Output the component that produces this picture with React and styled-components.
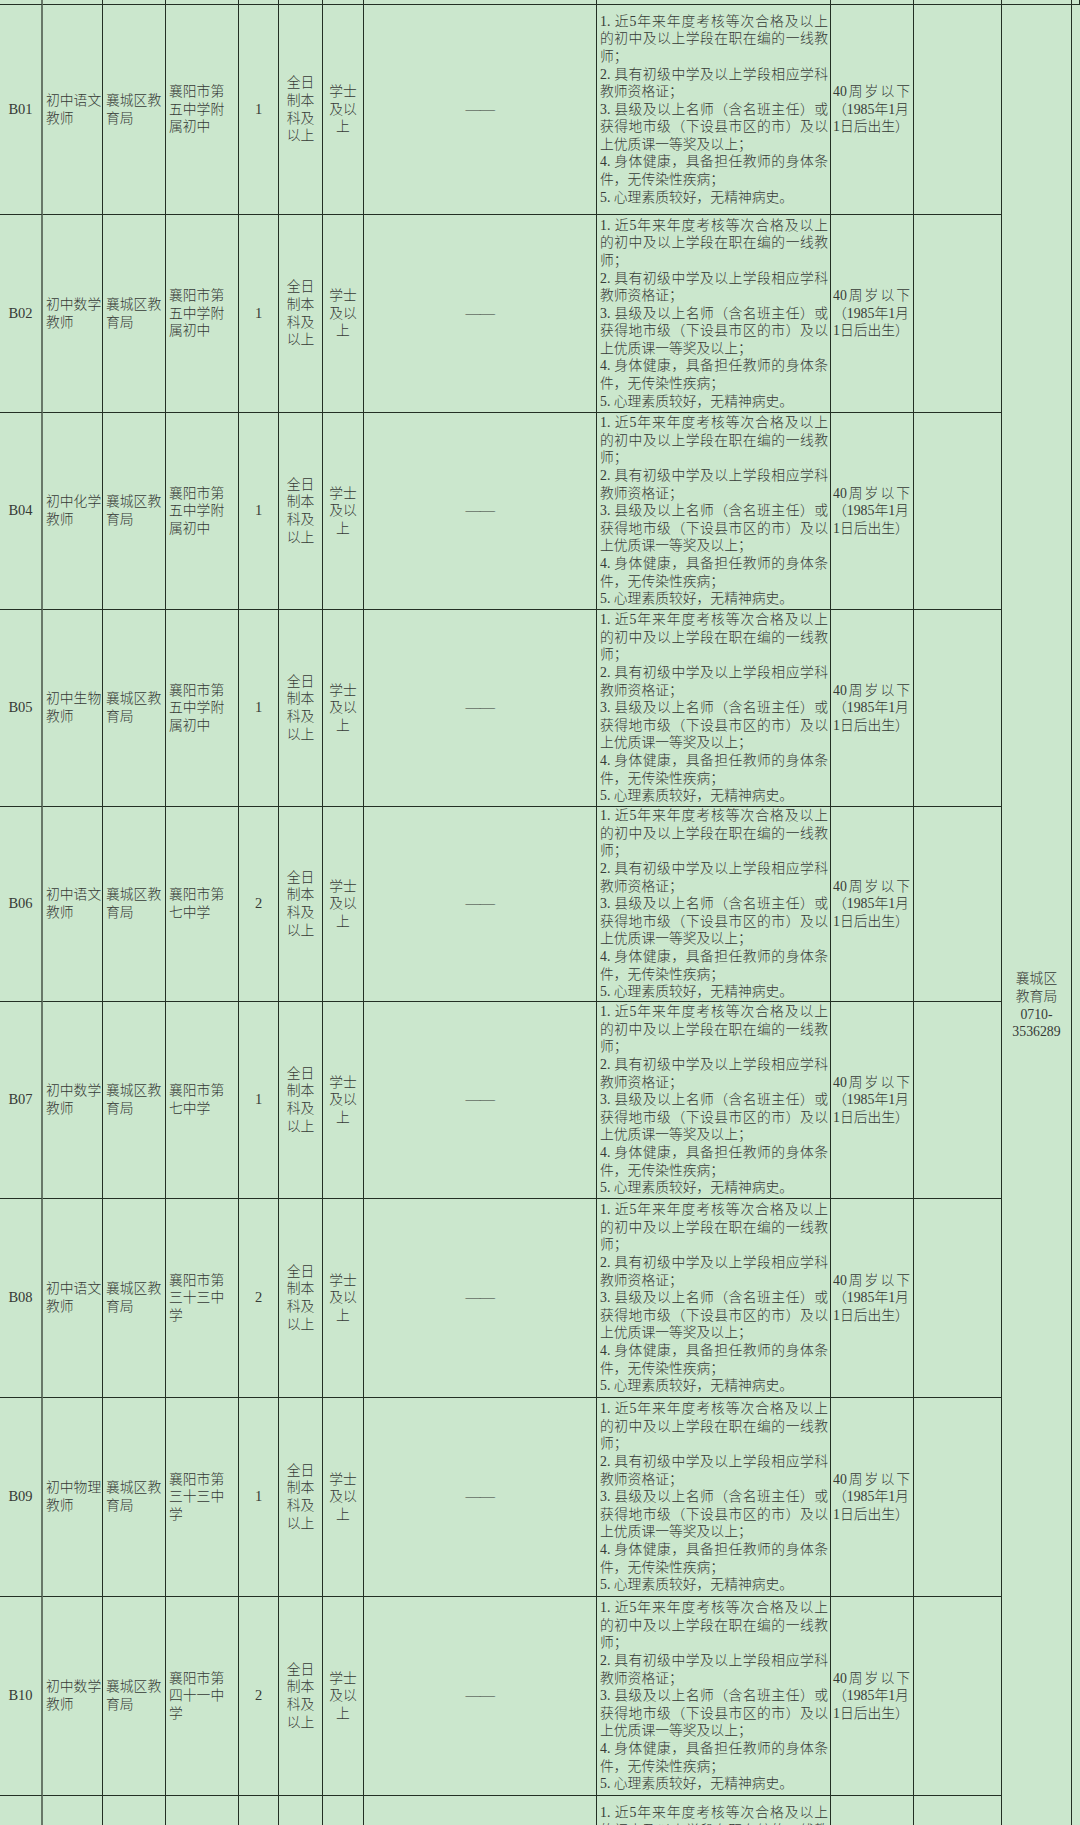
import React from 'react';
import styled, { createGlobalStyle } from 'styled-components';

const GlobalStyle = createGlobalStyle`
  html, body {
    margin: 0;
    padding: 0;
    background: #cbe7cd;
    overflow: hidden;
  }
  #root {
    width: 1080px;
    height: 1825px;
    overflow: hidden;
  }
`;

const LINE = '#243024';

const Sheet = styled.div`
  display: grid;
  grid-template-columns: 43px 60px 63px 73px 40px 44px 41px 233px 234px 83px 88px 70px 8px;
  grid-template-rows: 5px 210px 198px 197px 197px 195px 197px 199px 199px 199px 210px;
  width: 1080px;
  background: #cbe7cd;
  color: #363a36;
  font-family: "Liberation Serif", "Noto Sans CJK SC", serif;
  font-weight: 300;
  font-size: 13.8px;
  line-height: 17.6px;
`;

const Cell = styled.div`
  box-sizing: border-box;
  min-width: 0;
  overflow: hidden;
  display: flex;
  flex-direction: column;
  justify-content: center;
  align-items: ${(p) => (p.$center ? 'center' : 'stretch')};
  padding: 0 ${(p) => (p.$padR ?? 2)}px 0 ${(p) => (p.$padL ?? 3)}px;
  border-right: ${(p) => (p.$heavy ? '2px solid #687868' : `1px solid ${LINE}`)};
  border-bottom: ${(p) => (p.$open ? 'none' : `1px solid ${LINE}`)};
`;

const Code = styled.span`
  font-size: 14.5px;
  font-weight: 400;
`;

const Merged = styled(Cell)`
  grid-column: ${(p) => p.$col};
  grid-row: 2 / span 10;
  border-right: ${(p) => (p.$last ? 'none' : `1px solid ${LINE}`)};
`;

const Line = styled.div`
  white-space: nowrap;
  text-align: ${(p) => (p.$justify ? 'justify' : p.$mid ? 'center' : 'left')};
  text-align-last: ${(p) => (p.$justify ? 'justify' : p.$mid ? 'center' : 'left')};
`;

const Dash = styled.span`
  font-family: "Liberation Serif", serif;
  font-size: 15px;
  font-weight: 400;
  letter-spacing: -0.5px;
`;

const REQ = [
  ['1. 近5年来年度考核等次合格及以上', true],
  ['的初中及以上学段在职在编的一线教', true],
  ['师；', false],
  ['2. 具有初级中学及以上学段相应学科', true],
  ['教师资格证；', false],
  ['3. 县级及以上名师（含名班主任）或', true],
  ['获得地市级（下设县市区的市）及以', true],
  ['上优质课一等奖及以上；', false],
  ['4. 身体健康，具备担任教师的身体条', true],
  ['件，无传染性疾病；', false],
  ['5. 心理素质较好，无精神病史。', false],
];

const SCHOOL5 = ['襄阳市第', '五中学附', '属初中'];
const SCHOOL7 = ['襄阳市第', '七中学'];
const SCHOOL33 = ['襄阳市第', '三十三中', '学'];
const SCHOOL41 = ['襄阳市第', '四十一中', '学'];

const ROWS = [
  { code: 'B01', post: '语文', school: SCHOOL5, n: 1 },
  { code: 'B02', post: '数学', school: SCHOOL5, n: 1 },
  { code: 'B04', post: '化学', school: SCHOOL5, n: 1 },
  { code: 'B05', post: '生物', school: SCHOOL5, n: 1 },
  { code: 'B06', post: '语文', school: SCHOOL7, n: 2 },
  { code: 'B07', post: '数学', school: SCHOOL7, n: 1 },
  { code: 'B08', post: '语文', school: SCHOOL33, n: 2 },
  { code: 'B09', post: '物理', school: SCHOOL33, n: 1 },
  { code: 'B10', post: '数学', school: SCHOOL41, n: 2 },
];

const Lines = ({ items, mid }) =>
  items.map((t, i) => (
    <Line key={i} $mid={mid}>
      {t}
    </Line>
  ));

const ReqLines = () =>
  REQ.map(([t, j], i) => (
    <Line key={i} $justify={j}>
      {t}
    </Line>
  ));

const Age = () => (
  <Cell $padL={2} $padR={3}>
    <Line $justify>40周岁以下</Line>
    <Line>（1985年1月</Line>
    <Line>1日后出生）</Line>
  </Cell>
);

const DataRow = ({ row }) => (
  <>
    <Cell $center $heavy $padL={0} $padR={0}>
      <Code>{row.code}</Code>
    </Cell>
    <Cell>
      <Lines items={[`初中${row.post}`, '教师']} />
    </Cell>
    <Cell>
      <Lines items={['襄城区教', '育局']} />
    </Cell>
    <Cell>
      <Lines items={row.school} />
    </Cell>
    <Cell $center $padL={0} $padR={0}>
      <Code>{row.n}</Code>
    </Cell>
    <Cell $center $padL={0} $padR={0}>
      <Lines items={['全日', '制本', '科及', '以上']} mid />
    </Cell>
    <Cell $center $padL={0} $padR={0}>
      <Lines items={['学士', '及以', '上']} mid />
    </Cell>
    <Cell $center $padL={0} $padR={0}>
      <Dash>——</Dash>
    </Cell>
    <Cell $padL={3} $padR={2}>
      <ReqLines />
    </Cell>
    <Age />
    <Cell />
  </>
);

export default function App() {
  return (
    <>
      <GlobalStyle />
      <Sheet>
        {Array.from({ length: 13 }).map((_, i) => (
          <Cell key={`top-${i}`} $heavy={i === 0} />
        ))}
        <Merged $col={12} $center $open $padL={0} $padR={0}>
          <Lines items={['襄城区', '教育局', '0710-', '3536289']} mid />
        </Merged>
        <Merged $col={13} $open $last $padL={0} $padR={0} />
        {ROWS.map((row) => (
          <DataRow key={row.code} row={row} />
        ))}
        <Cell $heavy $open />
        <Cell $open />
        <Cell $open />
        <Cell $open />
        <Cell $open />
        <Cell $open />
        <Cell $open />
        <Cell $open />
        <Cell $open $padL={3} $padR={2}>
          <ReqLines />
        </Cell>
        <Cell $open />
        <Cell $open />
      </Sheet>
    </>
  );
}
